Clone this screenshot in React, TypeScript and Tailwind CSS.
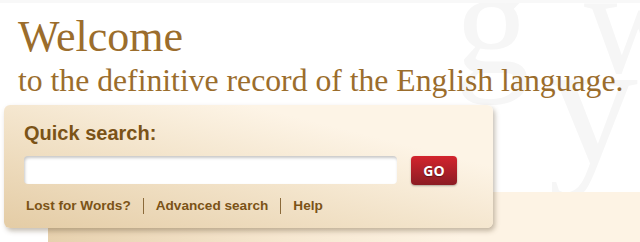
import React from 'react';

const serif = { fontFamily: '"Liberation Serif", "Times New Roman", serif' };
const sans = { fontFamily: '"Liberation Sans", Arial, sans-serif' };

const Watermark: React.FC = () => (
  <div
    aria-hidden
    className="pointer-events-none absolute inset-0 select-none leading-none text-[#f6f6f6]"
    style={serif}
  >
    <span className="absolute left-[455px] top-[-56px] text-[150px]">g</span>
    <span className="absolute left-[584px] top-[-56px] text-[150px]">w</span>
    <span className="absolute left-[548px] top-[10px] text-[180px]">y</span>
  </div>
);

const QuickSearch: React.FC = () => {
  const links = ['Lost for Words?', 'Advanced search', 'Help'];
  return (
    <div className="relative ml-[4px] h-[123px] w-[489px] rounded-[6px] bg-[linear-gradient(to_top_right,#e4cca5_0%,#f3e4cb_45%,#fdf4e6_75%)] pl-[20px] pt-[18px] shadow-[2px_3px_5px_rgba(90,70,40,0.35)]">
      <h2 className="text-[20px] font-bold leading-none text-[#7b5317]" style={sans}>
        Quick search:
      </h2>
      <div className="mt-[13px] flex items-center gap-[14px]">
        <input
          type="text"
          className="h-[28px] w-[373px] rounded-[4px] bg-white shadow-[inset_1px_2px_3px_rgba(0,0,0,0.22)] outline-none"
        />
        <button
          className="h-[29px] w-[46px] rounded-[4px] bg-[linear-gradient(to_bottom,#d3242d,#8b1c23)] text-[14px] font-bold text-white shadow-[0_1px_2px_rgba(0,0,0,0.3)] [text-shadow:0_1px_1px_rgba(0,0,0,0.4)]"
          style={{ fontFamily: '"Open Sans", "Liberation Sans", sans-serif' }}
        >
          GO
        </button>
      </div>
      <div
        className="ml-[2px] mt-[13px] flex items-center text-[13.6px] font-bold leading-none text-[#7b5317]"
        style={sans}
      >
        {links.map((l, i) => (
          <React.Fragment key={l}>
            {i > 0 && <span className="mx-[12px] h-[16px] w-px bg-[#8b6a3a]" />}
            <a href="#" className="hover:underline">
              {l}
            </a>
          </React.Fragment>
        ))}
      </div>
    </div>
  );
};

export default function App() {
  return (
    <div className="relative h-[242px] w-[640px] overflow-hidden border-t-[3px] border-[#f8f8f8] bg-white">
      <Watermark />
      <div
        aria-hidden
        className="absolute bottom-0 left-[48px] right-0 top-[189px] bg-[linear-gradient(to_right,#e7d1ae,#f6e7d0_40%,#fdf3e4_70%)]"
      />
      <div className="relative">
        <div className="pl-[18px] pt-[12px] text-[#9b6d2c]" style={serif}>
          <h1 className="text-[44px] leading-none">Welcome</h1>
          <p className="mt-[6px] text-[31.7px] leading-none">
            to the definitive record of the English language.
          </p>
        </div>
        <div className="mt-[8px]">
          <QuickSearch />
        </div>
      </div>
    </div>
  );
}
